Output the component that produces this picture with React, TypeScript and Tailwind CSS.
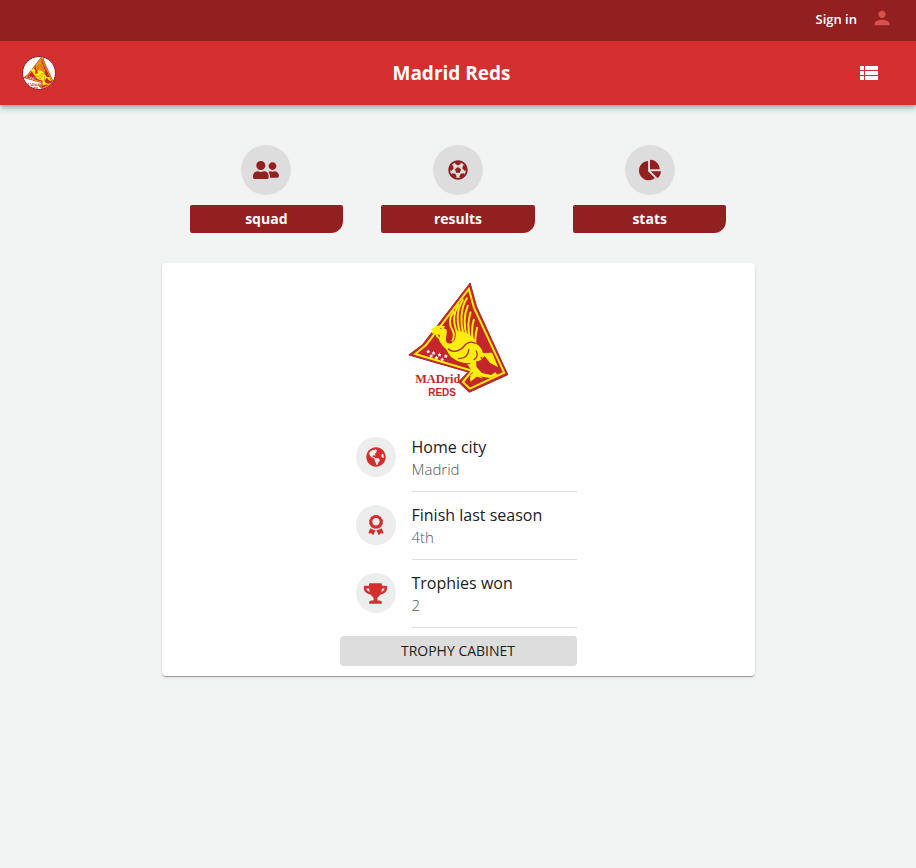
import React from "react";
import type { IconType } from "react-icons";
import { FaAward, FaChartPie, FaFutbol, FaGlobeAmericas, FaTrophy, FaUserFriends } from "react-icons/fa";
import { MdPerson, MdViewList } from "react-icons/md";

type Section = { label: string; icon: IconType; size: number };
type Fact = { title: string; value: string; icon: IconType; size: number };

const sections: Section[] = [
  { label: "squad", icon: FaUserFriends, size: 26 },
  { label: "results", icon: FaFutbol, size: 20 },
  { label: "stats", icon: FaChartPie, size: 22 },
];

const facts: Fact[] = [
  { title: "Home city", value: "Madrid", icon: FaGlobeAmericas, size: 20 },
  { title: "Finish last season", value: "4th", icon: FaAward, size: 20 },
  { title: "Trophies won", value: "2", icon: FaTrophy, size: 23 },
];

const stars = [
  [99, 229], [115, 234], [133, 239], [152, 243], [108, 243], [124, 248], [141, 253],
];

function Crest({ className }: { className: string }) {
  return (
    <svg viewBox="39 21 302 348" className={className} role="img" aria-label="Madrid Reds crest">
      <path d="M225 24L244 94L338 299L222 352L190 321L219 291L41 240L82 209Z" fill="#c4262b" stroke="#a3262a" strokeWidth="3" strokeLinejoin="round" />
      <path d="M221 42L236 97L327 293L224 341L203 321L231 287L60 237L92 211Z" fill="none" stroke="#fdee0b" strokeWidth="6" />
      <g fill="#fdee0b">
        <path d="M108 166C114 155 126 152 136 151L150 154L145 160L153 163C158 172 151 184 153 199C158 209 168 207 176 198C184 188 182 176 181 163L192 170C203 168 222 176 236 192L244 207C252 212 262 223 263 234L291 233L309 277L285 264L268 243C260 255 252 259 243 259L244 286L266 297L251 300L264 311L242 304L224 303L235 291L224 264C207 266 186 261 174 250C160 242 158 225 148 218C136 208 133 195 134 181L127 178L132 187L145 190L150 199L140 195L136 205L131 192L123 185L120 173L112 176Z" />
        <path d="M216 266L238 269L260 294L287 300L301 292L307 300L284 309L247 303L226 320L224 307L234 295Z" />
      </g>
      <g fill="none" stroke="#fdee0b" strokeWidth="6" strokeLinecap="round">
        <path d="M176 110C160 130 162 150 173 168C178 178 176 188 172 196" />
        <path d="M190 90C172 118 174 145 188 180" />
        <path d="M203 75C184 105 184 145 198 182" />
        <path d="M215 70C196 100 194 145 207 184" />
        <path d="M218 92C206 120 206 155 216 188" />
        <path d="M226 112C217 140 218 165 225 192" />
        <path d="M236 134C228 158 230 178 233 198" />
        <path d="M246 158C240 176 241 190 240 204" />
      </g>
      <g fill="none" stroke="#c4262b" strokeWidth="4" strokeLinecap="round">
        <path d="M160 222C172 235 196 228 207 213C216 202 229 199 240 205" />
        <path d="M190 251C210 251 220 239 221 223" />
        <path d="M243 228C249 237 247 248 237 254" />
        <path d="M258 247C267 260 272 275 290 285" />
      </g>
      <circle cx="137" cy="160" r="2" fill="#c4262b" />
      {stars.map(([x, y]) => (
        <path
          key={`${x}-${y}`}
          transform={`translate(${x} ${y})`}
          d="M0-6L2-2L6-1L3 2L4 6L0 4L-4 6L-3 2L-6-1L-2-2Z"
          fill="#fff"
        />
      ))}
      <text x="60" y="324" fontSize="37" fontWeight="700" fill="#c4262b" className="font-['Liberation_Serif',serif]">
        MADrid
      </text>
      <text x="99" y="363" fontSize="30" fontWeight="700" fill="#c4262b" className="font-['Liberation_Sans_Narrow','Liberation_Sans',sans-serif]">
        REDS
      </text>
    </svg>
  );
}

export default function App() {
  return (
    <div className="min-h-screen bg-[#f1f4f3] font-['Open_Sans','Noto_Sans',sans-serif] text-[#212121]">
      <div className="relative z-10 flex h-[41px] items-center justify-end gap-[14px] bg-[#922020] pr-[23px] pb-1">
        <a href="#signin" className="text-[13px] leading-5 font-semibold text-white">
          Sign in
        </a>
        <span className="pb-[2px]">
          <MdPerson size={22} className="text-[#dc4f4f]" aria-hidden="true" />
        </span>
      </div>

      <header className="grid h-16 grid-cols-[1fr_auto_1fr] items-center bg-[#d32f2f] pr-[35px] pl-[22px] text-white shadow-[0_2px_4px_-1px_rgba(0,0,0,0.2),0_4px_5px_rgba(0,0,0,0.14),0_1px_10px_rgba(0,0,0,0.12)]">
        <a href="#home" aria-label="Home" className="flex size-[34px] items-center justify-center overflow-hidden rounded-full border border-[#922020] bg-white">
          <Crest className="h-9 w-8 shrink-0" />
        </a>
        <h1 className="text-[19px] leading-8 font-bold">Madrid Reds</h1>
        <button type="button" aria-label="Menu" className="justify-self-end">
          <MdViewList size={24} />
        </button>
      </header>

      <main className="mx-auto w-full max-w-[593px] pt-10">
        <nav className="grid grid-cols-3 px-[9px]">
          {sections.map(({ label, icon: Icon, size }) => (
            <a key={label} href={`#${label}`} className="flex flex-col items-center gap-[10px]">
              <span className="flex size-[50px] items-center justify-center rounded-full bg-[#dddddd] text-[#922020]">
                <Icon size={size} />
              </span>
              <span className="w-4/5 rounded-[2px] rounded-br-[12px] bg-[#922020] text-center text-sm leading-7 font-bold text-white">
                {label}
              </span>
            </a>
          ))}
        </nav>

        <section className="mt-[30px] flex flex-col items-center rounded bg-white pt-[19px] pb-[10px] shadow-[0_2px_1px_-1px_rgba(0,0,0,0.2),0_1px_1px_rgba(0,0,0,0.14),0_1px_3px_rgba(0,0,0,0.12)]">
          <Crest className="h-[116px] w-[101px]" />
          <div className="mt-[26px] w-[237px]">
            <ul>
              {facts.map(({ title, value, icon: Icon, size }) => (
                <li key={title} className="flex items-stretch gap-4 pl-4">
                  <span className="mt-[13px] flex size-10 shrink-0 items-center justify-center rounded-full bg-[#eceeed] text-[#d32f2f]">
                    <Icon size={size} />
                  </span>
                  <div className="flex-1 border-b border-[#dedede] pt-[11px] pb-3">
                    <p className="text-base leading-6 text-[#212121]">{title}</p>
                    <p className="text-[15px] leading-5 font-light text-[#555555]">{value}</p>
                  </div>
                </li>
              ))}
            </ul>
            <button type="button" className="mt-2 h-[30px] w-full rounded bg-[#dddddd] text-sm">
              TROPHY CABINET
            </button>
          </div>
        </section>
      </main>
    </div>
  );
}
